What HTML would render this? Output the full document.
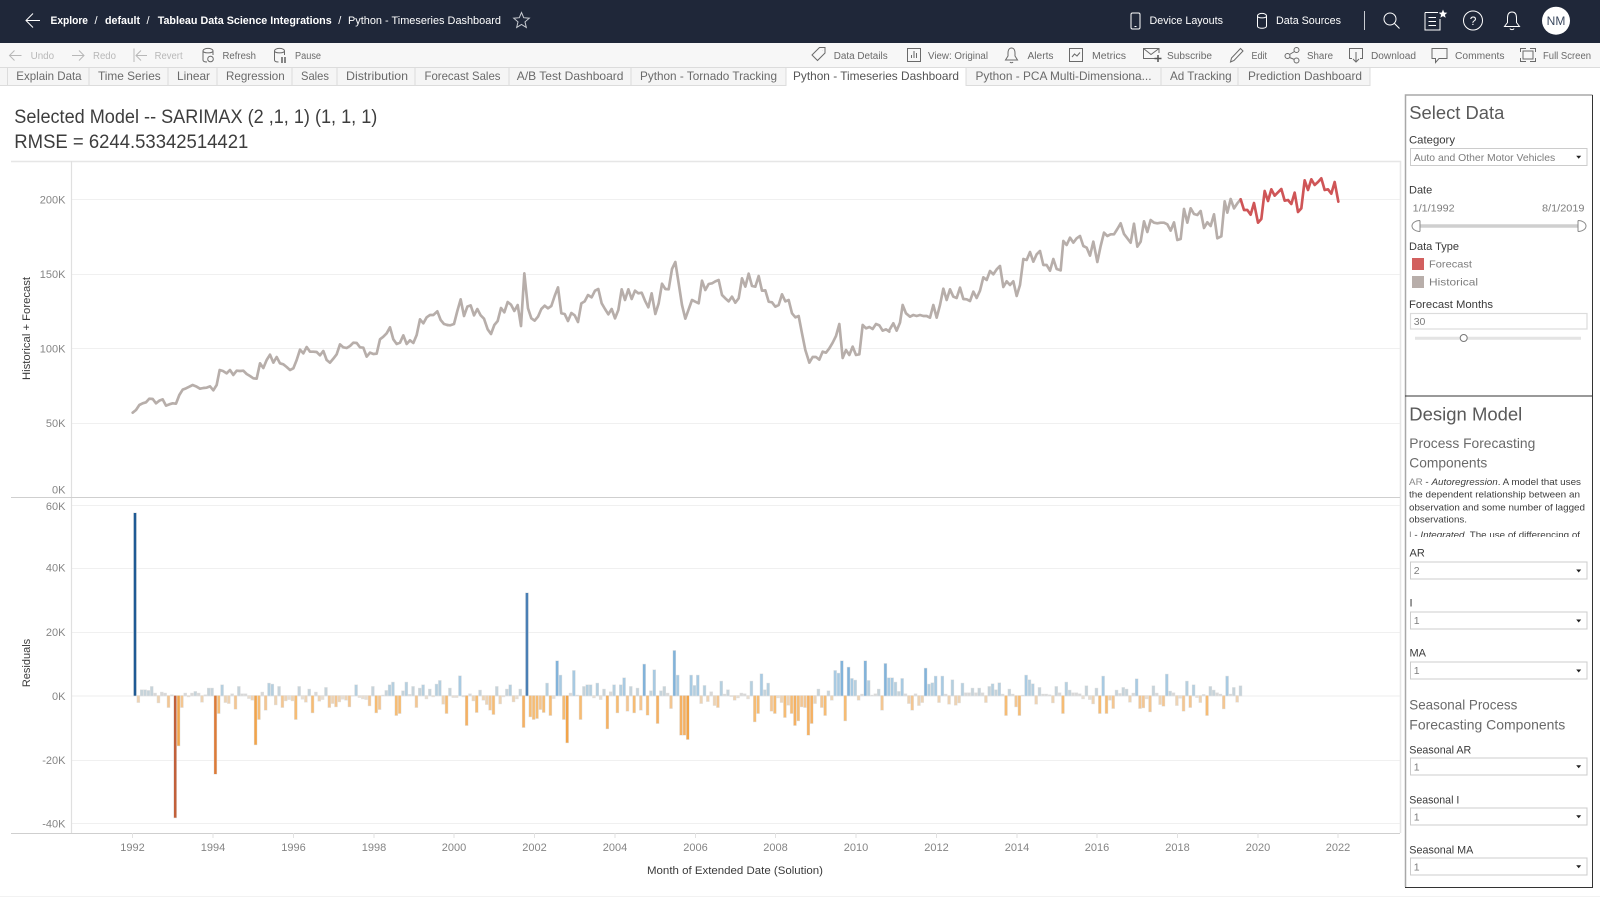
<!DOCTYPE html>
<html><head><meta charset="utf-8"><title>Python - Timeseries Dashboard</title>
<style>
html,body{margin:0;padding:0;background:#fff;width:1600px;height:898px;overflow:hidden}
svg{display:block;font-family:"Liberation Sans",sans-serif}
.h{fill:#fff;font-size:11px}.hb{fill:#fff;font-size:11px;font-weight:bold}
.d{fill:#b8b8b8;font-size:10px}.e{fill:#6a6a6a;font-size:10px}
.t{fill:#6a6a6a;font-size:12px}
.ax{fill:#858585;font-size:11px}
.at{fill:#3a3a3a;font-size:11px}
.ti{fill:#3d3d3d;font-size:19px}
.pt{fill:#5a5a5a;font-size:18.5px}
.st{fill:#6a6a6a;font-size:14px}
.lb{fill:#3a3a3a;font-size:11px}
.v{fill:#7d7d7d;font-size:10.5px}
.b{fill:#3d3d3d;font-size:9.5px}
.ic{fill:none;stroke:#6a6a6a;stroke-width:1}
.icd{fill:none;stroke:#b8b8b8;stroke-width:1}
.ich{fill:none;stroke:#fff;stroke-width:1}
.sel{fill:#fff;stroke:#ccc;stroke-width:1}
.ar{fill:#222}
.g{stroke:#f0f0f0;stroke-width:1}
</style></head><body>
<svg id="s" width="1600" height="898" viewBox="0 0 1600 898" xmlns="http://www.w3.org/2000/svg">
<rect width="1600" height="898" fill="#fff"/>
<!-- header -->
<rect width="1600" height="43" fill="#1f2739"/>
<path class="ich" d="M40 20.5H26M33 13.5L26 20.5L33 27.5"/>
<text class="hb" x="50.5" y="24" textLength="37.5" lengthAdjust="spacingAndGlyphs">Explore</text>
<text class="h" x="94.5" y="24">/</text>
<text class="hb" x="105" y="24" textLength="35" lengthAdjust="spacingAndGlyphs">default</text>
<text class="h" x="146.5" y="24">/</text>
<text class="hb" x="157.7" y="24" textLength="174" lengthAdjust="spacingAndGlyphs">Tableau Data Science Integrations</text>
<text class="h" x="338.3" y="24">/</text>
<text class="h" x="348" y="24" textLength="153" lengthAdjust="spacingAndGlyphs">Python - Timeseries Dashboard</text>
<path d="M521.5 12.5l2.2 5.2 5.6.5-4.3 3.7 1.3 5.5-4.8-2.9-4.8 2.9 1.3-5.5-4.3-3.7 5.6-.5z" fill="none" stroke="#c9ccd2"/>
<rect class="ich" x="1131" y="13" width="9" height="16" rx="1.5"/><path d="M1134.5 26.5h2" stroke="#fff"/>
<text class="h" x="1149.5" y="24" textLength="73.5" lengthAdjust="spacingAndGlyphs">Device Layouts</text>
<path class="ich" d="M1257.5 16c0-3.5 9-3.5 9 0v10c0 3-9 3-9 0zM1257.5 16c0 2.5 9 2.5 9 0"/>
<text class="h" x="1276" y="24" textLength="65" lengthAdjust="spacingAndGlyphs">Data Sources</text>
<path d="M1364.5 11V30" stroke="#c9ccd2"/>
<circle class="ich" cx="1390" cy="19" r="6"/><path class="ich" d="M1394.5 23.5L1399.5 28.5"/>
<path class="ich" d="M1425 12.5H1438M1425 12.5V30H1440V19"/><path class="ich" d="M1428.5 17.5H1436M1428.5 21.5H1436M1428.5 25.5H1436"/>
<path d="M1443 9.5l1.2 3 3.1.2-2.4 2 .8 3.1-2.7-1.7-2.7 1.7.8-3.1-2.4-2 3.1-.2z" fill="#fff"/>
<circle class="ich" cx="1473" cy="20.5" r="9.5"/><text x="1469.8" y="25" fill="#fff" font-size="12">?</text>
<path class="ich" d="M1512 12c-3.5 0-4.5 3-4.5 6v4.500l-3 4h15l-3-4V18c0-3-1-6-4.5-6zM1510 28.5c.5 1.500 3.5 1.500 4 0"/>
<circle cx="1556" cy="20.7" r="14" fill="#fff"/><text x="1556" y="25" text-anchor="middle" fill="#3c4a60" font-size="12">NM</text>
<!-- toolbar -->
<rect y="43" width="1600" height="24" fill="#f7f7f7"/>
<path class="icd" d="M21.5 55.5H9.5M14.5 50.5L9.5 55.5L14.5 60.5M84 55.5H72M79 50.5L84 55.5L79 60.5M134 48.5V62M147 55.5H136M141 50.5L136 55.5L141 60.5"/>
<text class="d" x="30.6" y="59" textLength="23.5" lengthAdjust="spacingAndGlyphs">Undo</text>
<text class="d" x="93" y="59" textLength="23" lengthAdjust="spacingAndGlyphs">Redo</text>
<text class="d" x="154.6" y="59" textLength="28" lengthAdjust="spacingAndGlyphs">Revert</text>
<path class="ic" d="M203 51c0-3.5 10-3.5 10 0v4M203 51c0 2.5 10 2.5 10 0M203 51v9c0 1.5 2 2 4 2"/><circle class="ic" cx="210.5" cy="59" r="2.8"/>
<text class="e" x="222.5" y="59" textLength="33.5" lengthAdjust="spacingAndGlyphs">Refresh</text>
<path class="ic" d="M274.5 51c0-3.5 10-3.5 10 0v4M274.5 51c0 2.5 10 2.5 10 0M274.5 51v9c0 1.5 2 2 4 2"/><path d="M282 57v6M285 57v6" stroke="#555" stroke-width="1.4"/>
<text class="e" x="295" y="59" textLength="26" lengthAdjust="spacingAndGlyphs">Pause</text>
<path class="ic" d="M812 55l7.500-7.500h5.500v5.500L817.500 60.500zM822.500 50.500h.1"/>
<text class="e" x="833.7" y="59" textLength="54" lengthAdjust="spacingAndGlyphs">Data Details</text>
<rect class="ic" x="907.5" y="48.5" width="13" height="13"/><path class="ic" d="M911.5 58V55M914 58V51M916.5 58V53"/>
<text class="e" x="928" y="59" textLength="60" lengthAdjust="spacingAndGlyphs">View: Original</text>
<path class="ic" d="M1011.5 48c-2.5 0-3.5 2.5-3.5 5v3l-2.5 4h12l-2.5-4v-3c0-2.5-1-5-3.5-5zM1010 62c.5 1 2.5 1 3 0"/>
<text class="e" x="1027.5" y="59" textLength="26" lengthAdjust="spacingAndGlyphs">Alerts</text>
<rect class="ic" x="1069.5" y="48.5" width="13" height="13"/><path class="ic" d="M1072 57l2.500-3 2.500 2 3-3.500"/>
<text class="e" x="1092" y="59" textLength="34" lengthAdjust="spacingAndGlyphs">Metrics</text>
<path class="ic" d="M1156 58.5H1143.5V48.5H1159V53M1143.5 48.5L1151 54.5L1159 48.5"/><path d="M1158 55v7M1154.5 58.5h7" stroke="#555" stroke-width="1.5"/>
<text class="e" x="1167" y="59" textLength="45" lengthAdjust="spacingAndGlyphs">Subscribe</text>
<path class="ic" d="M1230.5 62l1-4 9-9.500 2.500 2.500-9 9.500z"/>
<text class="e" x="1251.5" y="59" textLength="15.5" lengthAdjust="spacingAndGlyphs">Edit</text>
<circle class="ic" cx="1287.5" cy="56" r="2.5"/><circle class="ic" cx="1296.5" cy="50" r="2.5"/><circle class="ic" cx="1296.5" cy="60.5" r="2.5"/><path class="ic" d="M1289.5 54.5l5-3M1289.5 57.5l5 2"/>
<text class="e" x="1307" y="59" textLength="26" lengthAdjust="spacingAndGlyphs">Share</text>
<path class="ic" d="M1352 58.5H1349.5V48.5H1362.5V58.5H1360M1356 52V62M1353 59l3 3 3-3"/>
<text class="e" x="1371" y="59" textLength="45" lengthAdjust="spacingAndGlyphs">Download</text>
<path class="ic" d="M1432 48.5H1447V58.5H1439L1435.5 62.5V58.5H1432z"/>
<text class="e" x="1455" y="59" textLength="49.5" lengthAdjust="spacingAndGlyphs">Comments</text>
<rect class="ic" x="1523" y="51" width="10" height="8"/><path class="ic" d="M1520.5 52V48.5H1526M1530 48.5H1535.5V52M1535.5 58V61.5H1530M1526 61.5H1520.5V58"/>
<text class="e" x="1543" y="59" textLength="48" lengthAdjust="spacingAndGlyphs">Full Screen</text>
<!-- tabs -->
<rect y="67" width="1370" height="18.5" fill="#f5f5f5"/>
<rect x="786" y="67" width="180" height="19.5" fill="#fff"/>
<path d="M0 67.5H1600" stroke="#dcdcdc"/><path d="M0 85.5H786M966 85.5H1370" stroke="#dcdcdc"/>
<path d="M7.5 67V86M89 67V86M168 67V86M217 67V86M292 67V86M337 67V86M415 67V86M509 67V86M631 67V86M786 67V86M966 67V86M1161 67V86M1238 67V86M1370 67V86" stroke="#dcdcdc"/>
<text class="t" x="16.3" y="80" textLength="65.3" lengthAdjust="spacingAndGlyphs">Explain Data</text>
<text class="t" x="98" y="80" textLength="62.7" lengthAdjust="spacingAndGlyphs">Time Series</text>
<text class="t" x="177" y="80" textLength="33" lengthAdjust="spacingAndGlyphs">Linear</text>
<text class="t" x="226" y="80" textLength="58.7" lengthAdjust="spacingAndGlyphs">Regression</text>
<text class="t" x="301" y="80" textLength="28" lengthAdjust="spacingAndGlyphs">Sales</text>
<text class="t" x="346" y="80" textLength="62" lengthAdjust="spacingAndGlyphs">Distribution</text>
<text class="t" x="424.5" y="80" textLength="76" lengthAdjust="spacingAndGlyphs">Forecast Sales</text>
<text class="t" x="516.8" y="80" textLength="106.7" lengthAdjust="spacingAndGlyphs">A/B Test Dashboard</text>
<text class="t" x="640" y="80" textLength="137" lengthAdjust="spacingAndGlyphs">Python - Tornado Tracking</text>
<text class="t" x="793" y="80" textLength="166" lengthAdjust="spacingAndGlyphs" style="fill:#555">Python - Timeseries Dashboard</text>
<text class="t" x="975.5" y="80" textLength="176" lengthAdjust="spacingAndGlyphs">Python - PCA Multi-Dimensiona...</text>
<text class="t" x="1170" y="80" textLength="61.6" lengthAdjust="spacingAndGlyphs">Ad Tracking</text>
<text class="t" x="1248" y="80" textLength="114" lengthAdjust="spacingAndGlyphs">Prediction Dashboard</text>
<!-- title -->
<text class="ti" x="14.3" y="123" textLength="363" lengthAdjust="spacingAndGlyphs">Selected Model -- SARIMAX (2 ,1, 1) (1, 1, 1)</text>
<text class="ti" x="14.3" y="148" textLength="234" lengthAdjust="spacingAndGlyphs">RMSE = 6244.53342514421</text>
<!-- grid -->
<path class="g" d="M72 199.5H1400M72 274.5H1400M72 348.5H1400M72 423.5H1400M72 505.5H1400M72 568.5H1400M72 632.5H1400M72 760.5H1400M72 823.5H1400"/>
<path d="M72 696H1400" stroke="#ececec"/>
<path d="M11 161.5H1400.5V833" stroke="#e6e6e6" stroke-width="1.5" fill="none"/>
<path d="M71.5 161V833" stroke="#e0e0e0" stroke-width="1.2"/>
<path d="M11 497.5H1400" stroke="#cfcfcf"/>
<path d="M11 833.5H1400" stroke="#cfcfcf"/>
<path d="M132.5 833V838M213 833V838M293.5 833V838M374 833V838M454 833V838M534.5 833V838M615 833V838M695.5 833V838M775.5 833V838M856 833V838M936.5 833V838M1017 833V838M1097 833V838M1177.5 833V838M1258 833V838M1338 833V838" stroke="#e2e2e2"/>
<g class="ax" text-anchor="end">
<text x="65.5" y="203.5">200K</text><text x="65.5" y="278">150K</text><text x="65.5" y="352.5">100K</text><text x="65.5" y="427">50K</text><text x="65.5" y="493.5">0K</text>
<text x="65.5" y="510">60K</text><text x="65.5" y="571.5">40K</text><text x="65.5" y="636">20K</text><text x="65.5" y="700">0K</text><text x="65.5" y="764">-20K</text><text x="65.5" y="827.5">-40K</text>
</g>
<text class="at" transform="translate(30 328.5) rotate(-90)" text-anchor="middle" textLength="103" lengthAdjust="spacingAndGlyphs">Historical + Forecast</text>
<text class="at" transform="translate(30 663) rotate(-90)" text-anchor="middle">Residuals</text>
<g class="ax" text-anchor="middle">
<text x="132.5" y="851">1992</text><text x="213" y="851">1994</text><text x="293.5" y="851">1996</text><text x="374" y="851">1998</text><text x="454" y="851">2000</text><text x="534.5" y="851">2002</text><text x="615" y="851">2004</text><text x="695.5" y="851">2006</text><text x="775.5" y="851">2008</text><text x="856" y="851">2010</text><text x="936.5" y="851">2012</text><text x="1017" y="851">2014</text><text x="1097" y="851">2016</text><text x="1177.5" y="851">2018</text><text x="1258" y="851">2020</text><text x="1338" y="851">2022</text>
</g>
<text class="at" x="647" y="874" textLength="176" lengthAdjust="spacingAndGlyphs">Month of Extended Date (Solution)</text>
<!-- line chart -->
<g fill="none" stroke="#b7aeaa" stroke-width="8" stroke-linejoin="round" stroke-linecap="round">
<polyline transform="translate(0 160) scale(.33333)" points="398,758 408,750 418,735 428,730 438,727 448,716 458,717 468,730 478,722 488,718 498,737 508,733 518,730 528,731 538,705 548,689 558,685 568,680 578,675 588,679 600,686 610,684 620,683 630,679 640,691 650,675 659,630 669,633 680,640 690,630 700,645 710,632 720,633 730,632 740,642 750,648 760,655 770,656 780,610 790,624 800,600 810,584 820,608 830,591 840,610 850,613 860,621 870,630 880,625 890,600 900,569 910,580 920,561 930,575 940,575 950,576 960,586 970,573 980,600 990,608 1000,596 1010,583 1020,553 1030,562 1040,564 1050,558 1060,548 1070,549 1080,562 1090,563 1100,590 1110,578 1120,582 1130,581 1140,538 1150,530 1160,520 1170,502 1180,538 1190,552 1200,548 1210,526 1220,552 1230,541 1240,549 1250,525 1260,478 1270,490 1280,472 1290,465 1300,465 1312,454 1322,480 1332,492 1342,495"/>
<polyline transform="translate(440 240) scale(.33333)" points="22,255 30,256 42,252 52,213 62,178 72,228 82,200 92,196 102,226 112,207 122,226 132,236 143,268 153,282 163,255 173,243 183,204 193,217 203,186 213,194 223,213 233,195 243,258 253,100 264,205 274,235 284,242 294,230 304,207 314,197 324,205 334,198 344,168 354,142 364,220 374,222 384,243 394,219 404,226 414,246 424,190 434,184 444,165 455,172 465,152 475,147 485,190 495,207 505,223 515,207 525,235 535,210 545,148 555,180 565,148 575,177 585,152 595,160 605,158 615,182 625,202 635,160 646,222 656,190 666,131 676,147 686,148 696,87 706,66 716,130 726,195 736,236 746,208 756,180 766,185 776,190 786,122 796,150 806,132 816,130 826,124 836,120 846,165 856,175 866,184 876,170 886,188 896,175 906,115 916,140 926,101 936,138 946,140 956,108 966,152 976,151 986,185 996,187 1006,200 1016,195 1026,163 1036,184 1046,180 1056,220 1066,232 1076,228 1086,280 1096,330 1108,368 1118,351 1128,351 1138,359 1148,335 1158,338 1168,325 1178,308 1188,288 1198,252 1208,354 1218,330 1228,345 1238,320 1248,345 1258,343 1268,255 1278,265 1288,261 1298,267 1308,252 1318,256 1328,272 1338,268 1348,275"/>
<polyline transform="translate(880 170) scale(.33333)" points="27,482 40,460 50,482 60,458 68,405 78,430 90,440 100,435 110,438 120,435 130,438 140,438 150,443 160,405 170,443 180,405 190,356 200,390 210,358 220,380 230,384 240,353 250,387 260,388 270,393 280,365 290,384 300,362 310,322 320,330 330,303 340,313 350,298 360,288 370,351 380,334 390,345 400,334 410,378 420,345 430,267 440,270 450,246 460,275 470,253 480,243 490,285 500,285 510,302 520,267 530,297 542,301 550,213 560,225 570,203 580,218 590,205 600,198 610,228 620,233 630,257 640,215 652,276 662,228 672,188 682,198 692,193 702,193 712,177 722,160 732,192 742,205 752,218 762,161 772,230 782,215 792,154 802,186 812,150 822,158 832,160 842,158 852,158 862,163 872,182 882,157 892,210 902,207 912,117 922,158 932,115 942,132 952,135 962,123 972,174 982,157 992,168 1002,133 1012,205 1024,199 1034,94 1042,128 1052,87 1062,115 1072,100 1082,88"/>
<polyline stroke="#cf5557" transform="translate(880 170) scale(.33333)" points="1082,88 1092,120 1102,120 1112,134 1122,99 1134,158 1144,147 1154,63 1164,93 1174,58 1184,77 1194,67 1204,57 1214,92 1224,90 1234,102 1244,68 1254,126 1264,115 1274,31 1284,60 1294,28 1304,45 1314,36 1324,25 1334,60 1344,58 1354,71 1364,36 1375,95"/>
</g>
<g id="bars"></g>
<!-- right panel -->
<path d="M1405.5 887V95H1592.5" fill="none" stroke="#a8a8a8" stroke-width="1.5"/>
<path d="M1592.5 95V887.5H1405" fill="none" stroke="#333"/>
<path d="M1405 396H1593" stroke="#333"/>
<text class="pt" x="1409.3" y="119" textLength="95" lengthAdjust="spacingAndGlyphs">Select Data</text>
<text class="lb" x="1409" y="143.5" textLength="46" lengthAdjust="spacingAndGlyphs">Category</text>
<rect class="sel" x="1410.5" y="148.5" width="176.5" height="17"/>
<text class="v" x="1413.7" y="161" textLength="141.5" lengthAdjust="spacingAndGlyphs">Auto and Other Motor Vehicles</text>
<path class="ar" d="M1576.2 155.8h5l-2.5 3z"/>
<text class="lb" x="1409" y="193.7">Date</text>
<text class="v" x="1412.7" y="211.5" textLength="42" lengthAdjust="spacingAndGlyphs">1/1/1992</text>
<text class="v" x="1542" y="211.500" textLength="42.5" lengthAdjust="spacingAndGlyphs">8/1/2019</text>
<path d="M1420 226H1578" stroke="#cfcfcf" stroke-width="3.5"/>
<path d="M1420 220.5A8 5.5 0 0 0 1420 231.5M1420 220.5V231.5" fill="none" stroke="#8a8a8a"/>
<path d="M1578 220.5A8 5.5 0 0 1 1578 231.5M1578 220.5V231.5" fill="none" stroke="#8a8a8a"/>
<text class="lb" x="1409" y="250" textLength="50" lengthAdjust="spacingAndGlyphs">Data Type</text>
<rect x="1412" y="258" width="12" height="12" fill="#d2605f"/>
<text class="v" x="1429" y="267.500" font-size="11" textLength="43" lengthAdjust="spacingAndGlyphs">Forecast</text>
<rect x="1412" y="276" width="12" height="12" fill="#b8aeaa"/>
<text class="v" x="1429" y="285.5" textLength="49" lengthAdjust="spacingAndGlyphs">Historical</text>
<text class="lb" x="1409" y="308" textLength="84" lengthAdjust="spacingAndGlyphs">Forecast Months</text>
<rect x="1410.5" y="313.5" width="176.5" height="15.5" fill="#fff" stroke="#dcdcdc" stroke-width="1.2"/>
<text class="v" x="1413.7" y="325">30</text>
<path d="M1415 338.3H1581" stroke="#e4e4e4" stroke-width="3"/>
<circle cx="1463.7" cy="338" r="3.5" fill="#fff" stroke="#777"/>
<text class="pt" x="1409.3" y="420.7" textLength="113" lengthAdjust="spacingAndGlyphs">Design Model</text>
<text class="st" x="1409.3" y="448" textLength="126" lengthAdjust="spacingAndGlyphs">Process Forecasting</text>
<text class="st" x="1409.3" y="467.7" textLength="78" lengthAdjust="spacingAndGlyphs">Components</text>
<text class="b" x="1409" y="485" textLength="172" lengthAdjust="spacingAndGlyphs"><tspan fill="#888">AR</tspan> - <tspan font-style="italic">Autoregression</tspan>. A model that uses</text>
<text class="b" x="1409" y="497.7" textLength="171" lengthAdjust="spacingAndGlyphs">the dependent relationship between an</text>
<text class="b" x="1409" y="510.7" textLength="176" lengthAdjust="spacingAndGlyphs">observation and some number of lagged</text>
<text class="b" x="1409" y="522.7" textLength="58" lengthAdjust="spacingAndGlyphs">observations.</text>
<clipPath id="c"><rect x="1405" y="525" width="187" height="12"/></clipPath>
<g clip-path="url(#c)"><text class="b" x="1409" y="538" textLength="171" lengthAdjust="spacingAndGlyphs"><tspan fill="#888">I</tspan> - <tspan font-style="italic">Integrated</tspan>. The use of differencing of</text></g>
<text class="lb" x="1409.5" y="556.7">AR</text>
<rect class="sel" x="1410.5" y="562" width="176.5" height="17"/><text class="v" x="1413.7" y="574">2</text><path class="ar" d="M1576.2 569.5h5l-2.5 3z"/>
<text class="lb" x="1409.5" y="606.7">I</text>
<rect class="sel" x="1410.5" y="612" width="176.5" height="17"/><text class="v" x="1413.7" y="624">1</text><path class="ar" d="M1576.2 619.5h5l-2.5 3z"/>
<text class="lb" x="1409.5" y="656.7">MA</text>
<rect class="sel" x="1410.5" y="662" width="176.5" height="17"/><text class="v" x="1413.7" y="674">1</text><path class="ar" d="M1576.2 669.5h5l-2.5 3z"/>
<text class="st" x="1409.3" y="709.3" textLength="108" lengthAdjust="spacingAndGlyphs">Seasonal Process</text>
<text class="st" x="1409.3" y="729.3" textLength="156" lengthAdjust="spacingAndGlyphs">Forecasting Components</text>
<text class="lb" x="1409.3" y="753.3" textLength="62" lengthAdjust="spacingAndGlyphs">Seasonal AR</text>
<rect class="sel" x="1410.5" y="758" width="176.5" height="17"/><text class="v" x="1413.7" y="770.5">1</text><path class="ar" d="M1576.2 765.3h5l-2.5 3z"/>
<text class="lb" x="1409.3" y="803.3" textLength="50" lengthAdjust="spacingAndGlyphs">Seasonal I</text>
<rect class="sel" x="1410.5" y="808" width="176.5" height="17"/><text class="v" x="1413.7" y="820.5">1</text><path class="ar" d="M1576.2 815.3h5l-2.5 3z"/>
<text class="lb" x="1409.3" y="853.3" textLength="64" lengthAdjust="spacingAndGlyphs">Seasonal MA</text>
<rect class="sel" x="1410.5" y="858" width="176.5" height="17"/><text class="v" x="1413.7" y="870.5">1</text><path class="ar" d="M1576.2 865.3h5l-2.5 3z"/>
<path d="M0 896.5H1600" stroke="#f2f2f2"/>
</svg>
<script>
var e=[-411,157,120,120,122,110,130,158,127,130,172,135,503,287,172,130,140,130,125,130,156,135,115,115,372,190,105,157,160,132,177,110,132,132,145,150,284,208,127,180,100,103,164,110,172,152,148,152,208,110,147,156,118,188,127,153,148,113,172,160,170,155,147,150,170,138,105,142,146,148,167,110,188,178,136,122,105,97,196,190,123,97,134,110,172,115,105,146,118,140,103,92,162,190,115,142,142,78,140,226,132,152,187,121,150,163,180,193,110,161,140,118,
105,155,146,118,232,-171,200,208,205,178,187,100,196,145,33,76,208,278,130,62,136,208,110,105,105,143,100,148,118,236,126,105,188,105,84,183,110,188,115,180,43,195,123,60,220,123,110,130,175,2,76,255,255,268,76,107,76,160,107,154,126,166,172,94,133,120,139,150,143,130,132,146,94,215,190,72,120,100,183,190,143,157,202,165,190,226,212,170,172,255,220,160,118,172,196,123,150,62,70,33,212,52,86,91,150,133,33,92,136,132,118,180,41,84,84,97,125,86,
132,160,180,132,166,157,55,103,99,79,157,79,133,162,90,165,158,100,129,129,115,129,115,129,157,110,102,120,99,133,196,118,133,170,196,136,76,90,102,162,113,133,133,135,158,110,129,190,97,121,129,129,132,146,108,148,161,115,190,79,190,150,175,121,131,113,118,156,130,87,175,173,146,185,108,130,163,168,73,124,129,166,144,183,94,172,105,142,157,134,196,110,121,129,133,176,79,133,113,156,108];
function col(v){var d=v-137;
if(d<0){var h=-d;return h<12?"#d8d8d8":h<30?"#c6d3da":h<50?"#b5cfdf":h<80?"#a8cae2":h<150?"#82b3da":h<400?"#4a7fb5":"#1f5a94"}
return d<12?"#e8ddd0":d<30?"#edd3b4":d<50?"#f3c692":d<80?"#f6bc74":d<120?"#f5b163":d<170?"#f2a449":d<280?"#dd7b37":"#c2603a"}
var o="";
for(var i=0;i<e.length;i++){var x=135+3.35*i,y=650+e[i]/3,t=Math.min(y,695.7),h=Math.abs(y-695.7);
o+='<rect x="'+(x-1.7).toFixed(2)+'" y="'+(t-.5).toFixed(2)+'" width="3.4" height="'+(h+1).toFixed(2)+'" fill="#e0e0e0"/>';
o+='<rect x="'+(x-1.25).toFixed(2)+'" y="'+t.toFixed(2)+'" width="2.5" height="'+h.toFixed(2)+'" fill="'+col(e[i])+'"/>';}
document.getElementById("bars").innerHTML=o;
</script>
</body></html>
